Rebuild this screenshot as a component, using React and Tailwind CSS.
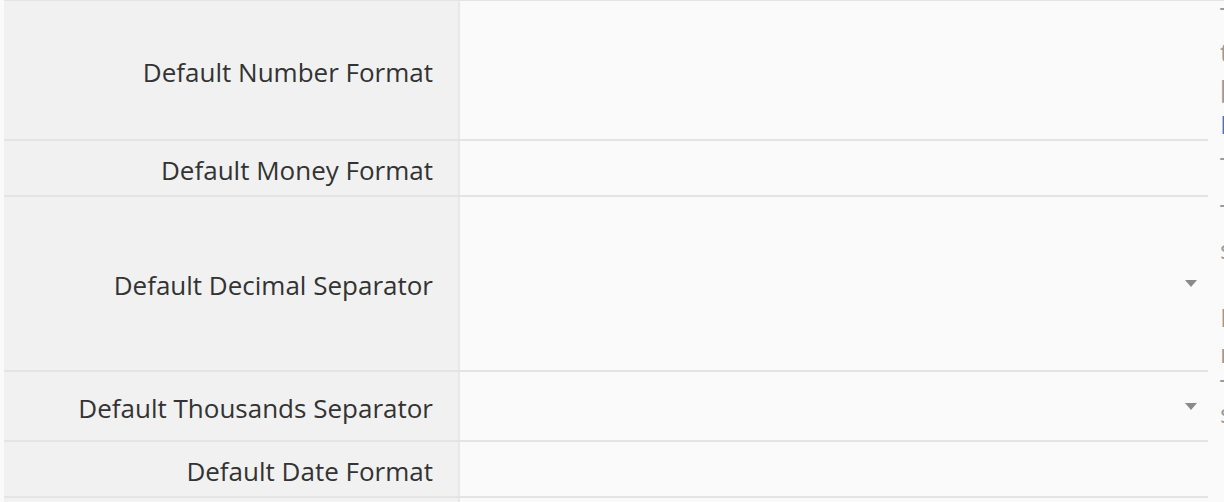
import React from "react";

const rows = [
  {
    label: "Default Number Format",
    height: "h-[141px] border-t",
    select: false,
    help: [
      { text: "The number format used across reports", cls: "mt-[-3px]" },
      { text: "that do not specify their own format.", cls: "" },
      { text: "[See the documentation]", cls: "" },
      { text: "Learn more", cls: "text-[#3a78c4]" },
    ],
  },
  {
    label: "Default Money Format",
    height: "h-[56px]",
    select: false,
    help: [{ text: "The currency format for money fields.", cls: "pt-[7px]" }],
  },
  {
    label: "Default Decimal Separator",
    height: "h-[175px]",
    select: true,
    help: [
      { text: "The character that separates the", cls: "mt-[-2px]" },
      { text: "sides of a decimal number.", cls: "" },
      { text: "If left empty, the locale default", cls: "mt-[32px]" },
      { text: "rules are used instead.", cls: "" },
    ],
  },
  {
    label: "Default Thousands Separator",
    height: "h-[70px]",
    select: true,
    help: [
      { text: "The character that groups digits", cls: "mt-[-2px] h-[25px]" },
      { text: "such as 1,000,000.", cls: "" },
    ],
  },
  {
    label: "Default Date Format",
    height: "h-[56px]",
    select: false,
    help: [],
  },
  {
    label: "",
    height: "h-[40px]",
    select: false,
    help: [],
  },
];

function Caret() {
  return (
    <svg width="12" height="7" viewBox="0 0 12 7" className="fill-[#8a8a8a]">
      <path d="M0 0h12L6 7z" />
    </svg>
  );
}

function SettingRow({ row }) {
  return (
    <div className={`flex overflow-hidden border-[#e4e4e4] ${row.height}`}>
      <div className="flex w-[1204px] shrink-0 border-b-2 border-[#e4e4e4]">
        <div className="flex w-[454px] shrink-0 items-center justify-end bg-[#f1f1f1] pt-[4px] pr-[25px] text-[26px] text-[#333333]">
          {row.label}
        </div>
        <div className="w-[2px] shrink-0 bg-[#e8e8e8]" />
        <div className="flex flex-1 items-center justify-end bg-[#fafafa] pr-[11px]">
          {row.select && <Caret />}
        </div>
      </div>
      <div className="w-[300px] shrink-0 overflow-hidden pl-[12px] text-[26px] leading-[36px] whitespace-nowrap text-[#9a9a9a]">
        {row.help.map((h, i) => (
          <div key={i} className={h.cls}>
            {h.text}
          </div>
        ))}
      </div>
    </div>
  );
}

export default function App() {
  return (
    <div
      className="h-[502px] w-[1224px] overflow-hidden bg-[#fafafa] pl-[4px]"
      style={{ fontFamily: '"Open Sans", "Noto Sans", sans-serif' }}
    >
      {rows.map((row, i) => (
        <SettingRow key={i} row={row} />
      ))}
    </div>
  );
}
